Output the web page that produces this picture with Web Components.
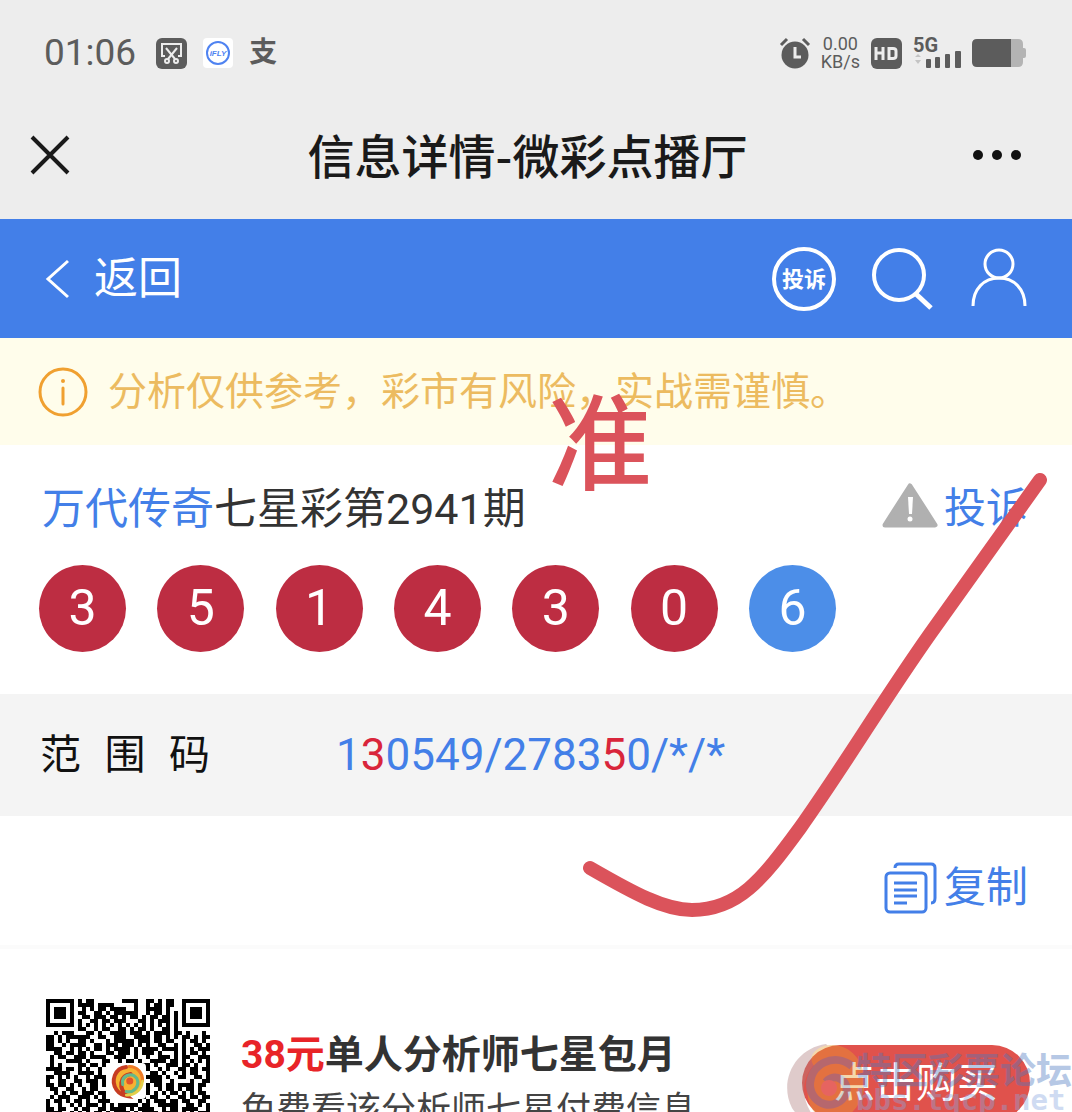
<!DOCTYPE html>
<html lang="zh-CN">
<head>
<meta charset="utf-8">
<meta name="viewport" content="width=device-width, initial-scale=1">
<title>信息详情-微彩点播厅</title>
<style>
  body {
    margin: 0;
    background: #fff;
    font-family: Roboto, "Noto Sans CJK SC", sans-serif;
    color: #333;
  }
</style>
</head>
<body>
<lottery-page></lottery-page>

<script>
// Base class: every element renders its own template in an open shadow root
class BaseElement extends HTMLElement {
  constructor() {
    super();
    this.attachShadow({ mode: 'open' });
  }

  connectedCallback() {
    this.shadowRoot.innerHTML = `
      <style>
        :host { display: block; box-sizing: border-box; }
        h1, h2, h3, p { margin: 0; }
        svg { display: block; flex-shrink: 0; overflow: visible; }
        button, a { font: inherit; color: inherit; background: none; border: none; margin: 0; padding: 0; text-decoration: none; cursor: pointer; }
      </style>
      ${this.template()}
    `;
  }
}

class StatusBar extends BaseElement {
  template() {
    return `
      <style>
        :host {
          display: flex;
          align-items: center;
          justify-content: space-between;
          height: 96px;
          padding: 10px 46px 0 44px;
          background: #ededed;
          color: #5c5c5c;
        }
        .group { display: flex; align-items: center; }
        .left { gap: 16px; }
        .right { gap: 11px; }
        .time { font-size: 37px; line-height: 40px; margin-right: 4px; }
        .pay { font-size: 28px; line-height: 30px; font-weight: bold; }
        .speed { font-size: 18px; line-height: 18px; text-align: center; }
      </style>
      <div class="group left">
        <span class="time">01:06</span>
        <svg width="31" height="31" viewBox="0 0 31 31" fill="none" stroke="#ededed" stroke-width="2">
          <rect width="31" height="31" rx="6" fill="#5c5c5c" stroke="none"/>
          <path d="M9 18H6V6H25V18H22M10 10L19 21M21 10L12 21"/>
          <circle cx="11" cy="23" r="2"/>
          <circle cx="20" cy="23" r="2"/>
        </svg>
        <svg width="30" height="30" viewBox="0 0 30 30">
          <rect width="30" height="30" rx="4" fill="#fff"/>
          <circle cx="15" cy="15" r="11" fill="none" stroke="#4f83f1" stroke-width="2"/>
          <text x="15" y="18" font-family="Liberation Sans, sans-serif" font-size="8" font-weight="bold" font-style="italic" text-anchor="middle" fill="#4f83f1">iFLY</text>
        </svg>
        <span class="pay">支</span>
      </div>
      <div class="group right">
        <svg width="30" height="32" viewBox="0 0 30 32" fill="none" stroke="#5c5c5c" stroke-width="3">
          <circle cx="15" cy="18" r="13.5" fill="#5c5c5c" stroke="none"/>
          <path d="M1 8L7 2M29 8L23 2"/>
          <path d="M15 10V20H21" stroke="#ededed"/>
        </svg>
        <div class="speed"><div>0.00</div><div>KB/s</div></div>
        <svg width="31" height="31" viewBox="0 0 31 31">
          <rect width="31" height="31" rx="6" fill="#5c5c5c"/>
          <path d="M5 9V22M12 9V22M5 15H12M18 10.500H22Q25 10.500 25 13V18Q25 20.500 22 20.500H18Z" fill="none" stroke="#ededed" stroke-width="3"/>
        </svg>
        <svg width="48" height="32" viewBox="0 0 48 32" fill="#5c5c5c">
          <text x="0" y="15" font-family="Roboto, sans-serif" font-size="20" font-weight="bold">5G</text>
          <path d="M2 20L5 17L8 20ZM2 23H8L5 27Z" fill="#c4c4c4"/>
          <rect x="13" y="22" width="5" height="9" rx="1"/>
          <rect x="22" y="20" width="5" height="11" rx="1"/>
          <rect x="32" y="17" width="5" height="14" rx="1"/>
          <rect x="42" y="14" width="6" height="17" rx="1"/>
        </svg>
        <svg width="54" height="28" viewBox="0 0 54 28">
          <path d="M38 0H46Q51 0 51 5V9H52Q54 9 54 11V17Q54 19 52 19H51V23Q51 28 46 28H38Z" fill="#b4b4b4"/>
          <path d="M5 0H39V28H5Q0 28 0 23V5Q0 0 5 0Z" fill="#5c5c5c"/>
        </svg>
      </div>
    `;
  }
}

class TitleBar extends BaseElement {
  template() {
    return `
      <style>
        :host {
          display: flex;
          align-items: center;
          justify-content: space-between;
          height: 123px;
          padding: 0 48px 6px 31px;
          background: #ededed;
          color: #1a1a1a;
        }
        button { min-width: 52px; }
        h1 {
          padding-bottom: 2px;
          font-family: "Noto Sans CJK SC", sans-serif;
          font-size: 47px;
          line-height: 60px;
          font-weight: 500;
        }
      </style>
      <button aria-label="关闭">
        <svg width="38" height="38" viewBox="0 0 38 38" stroke="#1a1a1a" stroke-width="4">
          <path d="M1 1L37 37M37 1L1 37"/>
        </svg>
      </button>
      <h1><slot></slot></h1>
      <button aria-label="更多">
        <svg width="50" height="12" viewBox="0 0 50 12" fill="#111">
          <circle cx="6" cy="6" r="5"/>
          <circle cx="25" cy="6" r="5"/>
          <circle cx="44" cy="6" r="5"/>
        </svg>
      </button>
    `;
  }
}

class AppHeader extends BaseElement {
  template() {
    return `
      <style>
        :host {
          display: flex;
          align-items: center;
          justify-content: space-between;
          height: 119px;
          padding: 0 44px;
          background: #437fe8;
          color: #fff;
        }
        .back { display: flex; align-items: center; gap: 24px; font-size: 44px; line-height: 60px; }
        nav { display: flex; align-items: center; gap: 36px; }
        .ring {
          box-sizing: border-box;
          width: 64px;
          height: 64px;
          border: 4px solid #fff;
          border-radius: 50%;
          font-size: 22px;
          line-height: 58px;
          font-weight: bold;
          text-align: center;
        }
      </style>
      <a class="back" href="#">
        <svg width="26" height="40" viewBox="0 0 26 40" fill="none" stroke="#fff" stroke-width="3">
          <path d="M24 2L4 20L24 38"/>
        </svg>
        返回
      </a>
      <nav>
        <a class="ring" href="#">投诉</a>
        <a href="#" aria-label="搜索">
          <svg width="62" height="64" viewBox="0 0 62 64" fill="none" stroke="#fff">
            <circle cx="27" cy="28" r="25" stroke-width="4"/>
            <path d="M44 47L59 61" stroke-width="5"/>
          </svg>
        </a>
        <a href="#" aria-label="我的">
          <svg width="58" height="60" viewBox="0 0 58 60" fill="none" stroke="#fff" stroke-width="3">
            <circle cx="29" cy="15" r="14"/>
            <path d="M3 57C3 40 14 29 29 29C44 29 55 40 55 57"/>
          </svg>
        </a>
      </nav>
    `;
  }
}

class NoticeBar extends BaseElement {
  template() {
    return `
      <style>
        :host {
          display: flex;
          align-items: center;
          gap: 20px;
          height: 107px;
          padding: 0 38px;
          background: #fffdeb;
          color: #ecbb60;
          font-size: 39px;
          line-height: 52px;
        }
      </style>
      <svg width="50" height="50" viewBox="0 0 50 50" fill="none" stroke="#f0a030" stroke-width="3">
        <circle cx="25" cy="25" r="23"/>
        <path d="M25 21V37" stroke-width="3" stroke-linecap="round"/>
        <circle cx="25" cy="14" r="2" fill="#f0a030" stroke="none"/>
      </svg>
      <p><slot></slot></p>
    `;
  }
}

class LotteryBall extends BaseElement {
  template() {
    return `
      <style>
        :host {
          width: 87px;
          height: 87px;
          border-radius: 50%;
          background: #bd2d42;
          color: #fff;
          font-size: 50px;
          line-height: 87px;
          text-align: center;
        }
        :host([special]) { background: #4c8ee8; }
      </style>
      <slot></slot>
    `;
  }
}

class DrawResult extends BaseElement {
  template() {
    const numbers = this.getAttribute('numbers').split(',');
    const balls = numbers.map((n, i) =>
      `<lottery-ball ${i === numbers.length - 1 ? 'special' : ''}>${n}</lottery-ball>`
    ).join('');

    return `
      <style>
        :host { padding: 34px 44px 42px 39px; background: #fff; }
        header { display: flex; align-items: center; justify-content: space-between; }
        h2 { font-size: 43px; line-height: 60px; font-weight: normal; padding-left: 3px; }
        a { color: #437fe8; }
        .report { display: flex; align-items: center; gap: 6px; font-size: 42px; line-height: 60px; }
        .balls { display: flex; justify-content: space-between; max-width: 797px; margin-top: 26px; }
      </style>
      <header>
        <h2><a href="#">${this.getAttribute('author')}</a><slot></slot></h2>
        <a class="report" href="#">
          <svg width="56" height="52" viewBox="0 0 56 52">
            <path d="M28 3L53 42H3Z" fill="#b0b0b0" stroke="#b0b0b0" stroke-width="5" stroke-linejoin="round"/>
            <path d="M26 14H31L30 31H27Z" fill="#fff"/>
            <circle cx="28" cy="36" r="2.500" fill="#fff"/>
          </svg>
          投诉
        </a>
      </header>
      <div class="balls">${balls}</div>
    `;
  }
}

class RangeRow extends BaseElement {
  template() {
    return `
      <style>
        :host {
          display: flex;
          align-items: center;
          gap: 126px;
          height: 122px;
          padding: 0 40px;
          background: #f4f4f4;
          line-height: 60px;
        }
        .label { width: 170px; font-size: 41px; color: #111; text-align-last: justify; }
        .code { font-size: 44px; color: #437fe8; }
        ::slotted(b) { font-weight: normal; color: #d9253b; }
      </style>
      <span class="label">${this.getAttribute('label')}</span>
      <span class="code"><slot></slot></span>
    `;
  }
}

class CopyRow extends BaseElement {
  template() {
    return `
      <style>
        :host {
          display: flex;
          align-items: center;
          justify-content: flex-end;
          height: 129px;
          padding: 14px 44px 0;
          background: #fff;
        }
        button { display: flex; align-items: center; gap: 8px; font-size: 42px; line-height: 60px; color: #437fe8; }
      </style>
      <button>
        <svg width="54" height="52" viewBox="0 0 54 52" fill="none" stroke="#437fe8" stroke-width="3">
          <rect x="4" y="11" width="40" height="39" rx="4"/>
          <path d="M13 6Q13 2 17 2H49Q53 2 53 6V36Q53 41 49 41"/>
          <path d="M12 21H35M12 28H35M12 34H35M12 41H25"/>
        </svg>
        <slot></slot>
      </button>
    `;
  }
}

const QR_ROWS = [
  '#######.#.##.......####..##.#.##..#######',
  '#.....#.####.####.....#..#.##.##..#.....#',
  '#.###.#..#.#.##.####..#..####.#...#.###.#',
  '#.###.#.##..##.#.######..#.##.#.#.#.###.#',
  '#.###.#..##.###.##.#.##.#.##.##.#.#.###.#',
  '#.....#.#..##.##.###...##.#.###.#.#.....#',
  '#######.#.#.#.#.#.#.#.#.#.#.#.#.#.#######',
  '........##..#.##..##.#.##.#..##.#........',
  '..#.###...##.#..####.###.#.####.##.#...#.',
  '##.#.######..##..###..####.##.#.#.##.#.##',
  '##.#.#..##.#...#.#####.###.##.##..#.##.#.',
  '##..#.####..##.###.###.#.#..##..#.#..##.#',
  '####..#.#.#.##.#.####.#.####.####.#.#.###',
  '..##.##.##.#...##.###.#.###.#...#.#.##.#.',
  '.#.##..###.####..###..#..#..###.#.##..###',
  '.#...####.#...##..#.##.#..####.##.#.#.#.#',
  '.#.#....##.##.#..#....#.##.#..###.##.#..#',
  '####.##.#.#..#..........##..#.#..##.##.##',
  '..####..####.#..........#.##.#..#.#.##..#',
  '##.#.#.#..#.###..........####.#..##..##.#',
  '#..##..##.###.#...........###..#....#..##',
  '##.##.#.#..##.#..........#.##.##.####.##.',
  '.##..##..#.##............#..#.##.#.##.#..',
  '..#.#.##.###.##.........##.#.#.##.#.#.##.',
  '.#.###..###.#.#.........#.##..#..##.##.##',
  '#.##.#.##.#..###.......#.#.###.##.##..##.',
  '#..#..#.#.###.#.#.#####.##..#####..##.#.#',
  '##.##..#.##..##.####.#.####..#.##.####..#'
];

class QrCode extends BaseElement {
  template() {
    const rows = QR_ROWS.concat(QR_ROWS.slice(0, 13).reverse());
    let path = '';
    rows.forEach((row, y) => {
      [...row].forEach((cell, x) => {
        if (cell === '#') path += `M${x} ${y}h1v1h-1z`;
      });
    });

    return `
      <svg width="164" height="164" viewBox="0 0 41 41" role="img" aria-label="二维码">
        <path d="${path}" fill="#000" shape-rendering="crispEdges"/>
        <rect x="16" y="16" width="9" height="9" rx="1" fill="#fff"/>
        <g transform="translate(20.500 20.500) scale(.11)" fill="none" stroke-linecap="round">
          <circle r="33" fill="#f6b232"/>
          <path d="M-4 -32C-30 -30 -40 0 -26 20C-18 31 -8 33 -2 34C-22 16 -20 -12 6 -16" stroke="#c63c22" stroke-width="9"/>
          <path d="M2 -33C20 -34 34 -18 33 0" stroke="#ef7c28" stroke-width="7"/>
          <path d="M-12 8C-16 -12 8 -22 20 -6C28 10 14 28 -4 24" stroke="#63b98c" stroke-width="7"/>
          <path d="M33 0C32 22 12 34 -4 32" stroke="#e3d04a" stroke-width="6"/>
          <circle cx="4" cy="0" r="8" fill="#e2542a"/>
        </g>
      </svg>
    `;
  }
}

class PromoCard extends BaseElement {
  template() {
    return `
      <style>
        :host {
          display: flex;
          align-items: flex-start;
          padding: 50px 42px 40px 46px;
          border-top: 4px solid #fbfbfb;
          background: #fff;
        }
        .info { flex: 1; margin: 28px 0 0 31px; }
        h3 { font-size: 39px; line-height: 56px; color: #333; }
        em { font-style: normal; color: #e82428; }
        p { font-size: 35px; line-height: 56px; color: #444; }
        .buy {
          margin-top: 46px;
          padding: 0 32px;
          border-radius: 38px;
          background: #e0524c;
          color: #fff;
          font-size: 41px;
          line-height: 76px;
        }
      </style>
      <qr-code></qr-code>
      <div class="info">
        <h3><em>${this.getAttribute('price')}</em>${this.getAttribute('heading')}</h3>
        <p><slot></slot></p>
      </div>
      <button class="buy">点击购买</button>
    `;
  }
}

// Red pen marks drawn over the page
class PenMarks extends BaseElement {
  template() {
    return `
      <style>
        :host { position: absolute; inset: 0; pointer-events: none; color: #db535b; }
        .word { position: absolute; left: 548px; top: 387px; font-size: 104px; line-height: 120px; font-weight: 500; }
        svg { position: absolute; left: 580px; top: 470px; }
      </style>
      <span class="word"><slot></slot></span>
      <svg width="470" height="450" viewBox="580 470 470 450" fill="none" stroke="#db535b" stroke-width="14" stroke-linecap="round">
        <path d="M590 868C635 894 665 910 692 910C738 910 762 880 800 828C850 757 880 705 930 634L1040 480"/>
      </svg>
    `;
  }
}

class SiteWatermark extends BaseElement {
  template() {
    return `
      <style>
        :host {
          position: absolute;
          right: 0;
          bottom: 0;
          display: flex;
          height: 68px;
          overflow: hidden;
          pointer-events: none;
          opacity: .4;
          color: #4a78c0;
        }
        .text { margin: 4px 0 0 -10px; white-space: nowrap; }
        .name { font-family: "Noto Sans CJK SC", sans-serif; font-size: 36px; line-height: 40px; font-weight: bold; }
        .url { font-family: "DejaVu Sans Mono", monospace; font-size: 29px; line-height: 24px; font-weight: bold; color: #8aa8e0; }
      </style>
      <svg width="80" height="80" viewBox="0 0 80 80" fill="none">
        <path d="M40 0C10 4 -8 36 6 64C12 74 24 80 34 80C10 56 12 22 48 8Z" fill="#b08080"/>
        <path d="M38 2C64 -4 82 20 78 44C76 62 62 76 44 80C20 70 14 42 32 26C20 16 26 6 38 2Z" fill="#e8a030"/>
        <path d="M66 22C48 8 24 20 24 42C26 62 50 68 60 50C64 36 48 28 40 38" stroke="#7888a0" stroke-width="8"/>
        <circle cx="43" cy="44" r="8" fill="#f08080"/>
      </svg>
      <div class="text">
        <div class="name">特区彩票论坛</div>
        <div class="url">bbs.tqcp.net</div>
      </div>
    `;
  }
}

class LotteryPage extends BaseElement {
  template() {
    return `
      <style>
        :host { position: relative; height: 100vh; overflow: hidden; }
      </style>
      <status-bar></status-bar>
      <title-bar>信息详情-微彩点播厅</title-bar>
      <app-header></app-header>
      <main>
        <notice-bar>分析仅供参考，彩市有风险，实战需谨慎。</notice-bar>
        <draw-result author="万代传奇" numbers="3,5,1,4,3,0,6">七星彩第2941期</draw-result>
        <range-row label="范 围 码">1<b>3</b>0549/2783<b>5</b>0/*/*</range-row>
        <copy-row>复制</copy-row>
        <promo-card price="38元" heading="单人分析师七星包月">免费看该分析师七星付费信息</promo-card>
      </main>
      <pen-marks>准</pen-marks>
      <site-watermark></site-watermark>
    `;
  }
}

customElements.define('status-bar', StatusBar);
customElements.define('title-bar', TitleBar);
customElements.define('app-header', AppHeader);
customElements.define('notice-bar', NoticeBar);
customElements.define('lottery-ball', LotteryBall);
customElements.define('draw-result', DrawResult);
customElements.define('range-row', RangeRow);
customElements.define('copy-row', CopyRow);
customElements.define('qr-code', QrCode);
customElements.define('promo-card', PromoCard);
customElements.define('pen-marks', PenMarks);
customElements.define('site-watermark', SiteWatermark);
customElements.define('lottery-page', LotteryPage);
</script>
</body>
</html>
